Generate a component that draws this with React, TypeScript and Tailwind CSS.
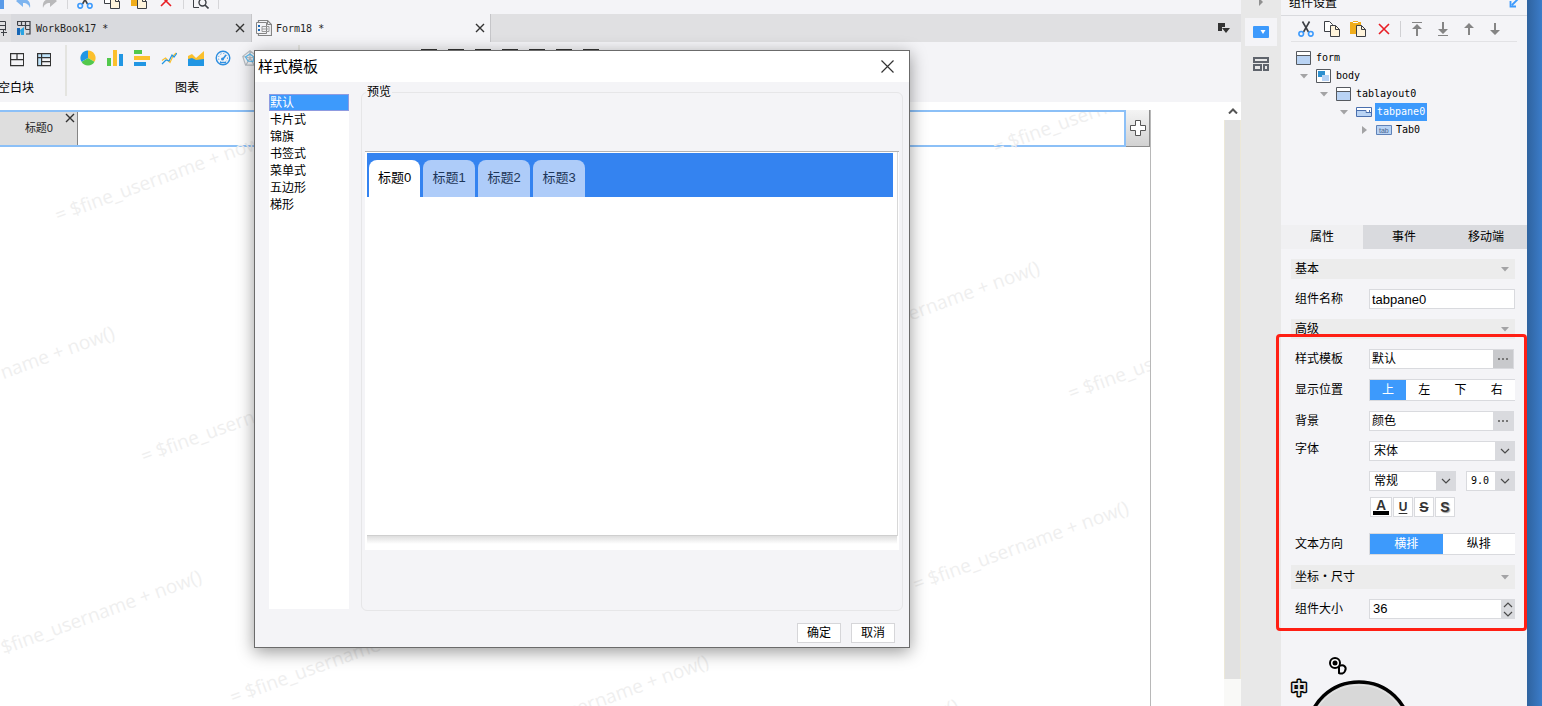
import type { ReactNode } from 'react';

const templates = ['默认', '卡片式', '锦旗', '书签式', '菜单式', '五边形', '梯形'];
const previewTabs = ['标题0', '标题1', '标题2', '标题3'];

const watermarks = [
  [58, 222], [144, 463], [233, 704], [-98, 416], [-11, 660],
  [996, 154], [1071, 400], [827, 351], [916, 591], [496, 745], [746, 789],
];

function Svg({ w = 16, h = 16, children }: { w?: number; h?: number; children: ReactNode }) {
  return (
    <svg width={w} height={h} viewBox={`0 0 ${w} ${h}`} fill="none" className="shrink-0" aria-hidden="true">
      {children}
    </svg>
  );
}

function CutIcon() {
  return (
    <Svg>
      <path d="M4.5 0.5 10.5 11M11.5 0.5 5.5 11" stroke="#3c3f45" strokeWidth="1.6" />
      <circle cx="3.2" cy="12.8" r="2.3" stroke="#3d9afc" strokeWidth="1.6" />
      <circle cx="12.8" cy="12.8" r="2.3" stroke="#3d9afc" strokeWidth="1.6" />
    </Svg>
  );
}

function CopyIcon() {
  return (
    <Svg>
      <path d="M0.5 0.5h5l3 3v7h-8z" fill="#fff" stroke="#3c3f45" />
      <path d="M6.5 4.5h5l4 4v7h-9z" fill="#fff4dc" stroke="#3c3f45" />
      <path d="M11.5 4.5v4h4" stroke="#3c3f45" />
    </Svg>
  );
}

function PasteIcon() {
  return (
    <Svg>
      <path d="M0 1h3V0h5v1h3v4H6v8H0z" fill="#f0ad1b" />
      <path d="M3 1.5h5" stroke="#fff" />
      <path d="M6.5 4.5h5l4 4v7h-9z" fill="#fff4dc" stroke="#3c3f45" />
      <path d="M11.5 4.5v4h4" stroke="#3c3f45" />
    </Svg>
  );
}

function DeleteIcon() {
  return (
    <Svg>
      <path d="M3 3l10 10M13 3L3 13" stroke="#e81e25" strokeWidth="1.6" />
    </Svg>
  );
}

function CloseIcon({ size = 10, width = 1.4 }: { size?: number; width?: number }) {
  return (
    <svg width={size} height={size} viewBox="0 0 10 10" aria-hidden="true">
      <path d="M1 1l8 8M9 1l-8 8" stroke="#333" strokeWidth={width} />
    </svg>
  );
}

function ArrowIcon({ up = false, bar = false }: { up?: boolean; bar?: boolean }) {
  return (
    <Svg>
      <g transform={up ? undefined : 'rotate(180 8 8)'} fill="#858585">
        {bar && <path d="M3 1h10v1H3z" />}
        {bar ? <path d="M7 6h2v9H7zM3 8l5-5 5 5z" /> : <path d="M7 5h2v9H7zM3 7l5-5 5 5z" />}
      </g>
    </Svg>
  );
}

function Caret({ right = false }: { right?: boolean }) {
  return (
    <Svg w={8} h={8}>
      <path d={right ? 'M2 0l5 4-5 4z' : 'M0 2h8l-4 4.5z'} fill="#a3a3a5" />
    </Svg>
  );
}

function Chevron({ up = false }: { up?: boolean }) {
  return (
    <Svg w={10} h={6}>
      <path d={up ? 'M1 5l4-4 4 4' : 'M1 1l4 4 4-4'} stroke="#4a4a4a" strokeWidth="1.2" />
    </Svg>
  );
}

function IconButton({ label, children }: { label: string; children: ReactNode }) {
  return (
    <button type="button" aria-label={label} className="flex shrink-0 items-center justify-center">
      {children}
    </button>
  );
}

function TopToolbar() {
  return (
    <div className="flex h-[14px] items-end gap-[9px] overflow-hidden bg-[#f4f4f7] pb-[5px]">
      <div className="-ml-3 flex gap-[11px]">
        <IconButton label="保存">
          <Svg><path d="M0 0h16v16H0z" fill="#5a9be8" /></Svg>
        </IconButton>
        <IconButton label="撤销">
          <Svg><path d="M1 8l7-6v4c5 0 8 3 7 9-1-3-3-5-7-5v4z" fill="#7db4ef" /></Svg>
        </IconButton>
        <IconButton label="重做">
          <Svg><path d="M15 8 8 2v4c-5 0-8 3-7 9 1-3 3-5 7-5v4z" fill="#b9b9bb" /></Svg>
        </IconButton>
      </div>
      <span className="h-4 w-px bg-[#d6d6d9]" />
      <div className="flex gap-[11px]">
        <IconButton label="剪切"><CutIcon /></IconButton>
        <IconButton label="复制"><CopyIcon /></IconButton>
        <IconButton label="粘贴"><PasteIcon /></IconButton>
        <IconButton label="删除"><DeleteIcon /></IconButton>
      </div>
      <span className="h-4 w-px bg-[#d6d6d9]" />
      <IconButton label="预览">
        <Svg>
          <path d="M6 14.5H.5V.5h12v5" stroke="#3c3f45" />
          <circle cx="9.5" cy="9.5" r="3.5" stroke="#3c3f45" strokeWidth="1.4" />
          <path d="M12 12l3.5 3.5" stroke="#3c3f45" strokeWidth="1.6" />
        </Svg>
      </IconButton>
      <span className="h-4 w-px bg-[#d6d6d9]" />
    </div>
  );
}

function FileTabs() {
  return (
    <div className="flex h-7 items-stretch bg-[#e0e0e2] font-['DejaVu_Sans_Mono',monospace] text-[10px] text-[#222]">
      <div className="flex w-[11px] items-center justify-end overflow-hidden pr-1">
        <Svg>
          <path d="M2.5 1.5h12v9M2.5 5.5h12M8.5 1.5v12M8.5 9.5h6M12.5 10v6M10 12.5h6" stroke="#3c3f45" />
        </Svg>
      </div>
      <div className="flex w-60 items-center gap-[5px] bg-[#d9dade] pr-1.5 pl-1.5">
        <Svg w={14} h={14}>
          <path d="M.5 4V.5h12.5v12.5H9M.5 4.5h12.5M4.5.5v4M8.5.5v8M9 8.5h4" stroke="#3c3f45" strokeWidth="1.2" />
          <path d="M0 7h3v7H0z" fill="#1766b5" />
          <path d="M3 9l4-3v8H4z" fill="#29a3e2" />
        </Svg>
        <span className="flex-1">WorkBook17 *</span>
        <IconButton label="关闭 WorkBook17"><CloseIcon /></IconButton>
      </div>
      <div className="flex w-60 items-center gap-1 border-x border-[#c6c6c9] bg-[#f4f4f7] pr-[5px] pl-1">
        <Svg>
          <path d="M2.5 3V.5h9l4 4v11h-13V13" stroke="#858585" strokeWidth="1.2" />
          <path d="M.5 2.5h10v11H.5z" fill="#f4f4f7" stroke="#858585" />
          <path d="M11.5.5v4h4" stroke="#858585" />
          <path d="M2 5h2v2H2zM2 9h2v2H2z" fill="#1766b5" />
          <path d="M6 6.5h7v5H6zM6 9h6" stroke="#9a9a9a" />
        </Svg>
        <span className="flex-1">Form18 *</span>
        <IconButton label="关闭 Form18"><CloseIcon /></IconButton>
      </div>
      <div className="flex flex-1 items-center justify-end pr-[11px]">
        <IconButton label="窗口列表">
          <Svg w={12} h={10}><path d="M0 0h7v4H4v4H0zM4 5h8L8 10z" fill="#333" /></Svg>
        </IconButton>
      </div>
    </div>
  );
}

function Ribbon() {
  return (
    <div className="flex h-[60px] items-start bg-[#f4f4f7] pt-[3px] text-xs text-black">
      <div className="flex h-[51px] w-[67px] flex-col justify-between border-r-2 border-[#e4e4e0] pt-1.5">
        <div className="flex gap-[13px] pl-2.5">
          <IconButton label="空白块">
            <Svg w={14} h={16}><path d="M.6 2.6h13v12H.6zM.6 8.6h13M7 2.6v6" stroke="#333" strokeWidth="1.2" /></Svg>
          </IconButton>
          <IconButton label="布局块">
            <Svg w={14} h={16}>
              <path d="M1 3h12v3H1zM1 6h3v8H1z" fill="#bfe3fa" />
              <path d="M.6 2.6h13v12H.6zM.6 6.6h13M4.6 2.6v12M4.6 10.6h9" stroke="#333" strokeWidth="1.2" />
            </Svg>
          </IconButton>
        </div>
        <span className="-ml-0.5">空白块</span>
      </div>
      <div className="flex h-[51px] w-[233px] flex-col justify-between border-r-2 border-[#e4e4e0] pt-[5px] pl-[13px]">
        <div className="flex gap-[11px]">
          <IconButton label="饼图">
            <Svg>
              <path d="M8 8V.5A7.5 7.5 0 0 1 14.5 11.8z" fill="#fbc02d" />
              <path d="M8 8l6.5 3.8A7.5 7.5 0 0 1 1.5 11.8z" fill="#52c84c" />
              <path d="M8 8 1.5 11.8A7.5 7.5 0 0 1 8 .5z" fill="#2196e3" />
            </Svg>
          </IconButton>
          <IconButton label="柱形图">
            <Svg>
              <path d="M0 8h4v8H0z" fill="#52c84c" />
              <path d="M6 0h4v16H6z" fill="#fbc02d" />
              <path d="M12 4h4v12h-4z" fill="#2196e3" />
            </Svg>
          </IconButton>
          <IconButton label="条形图">
            <Svg>
              <path d="M0 0h8v4H0z" fill="#52c84c" />
              <path d="M0 6h16v4H0z" fill="#fbc02d" />
              <path d="M0 12h12v4H0z" fill="#2196e3" />
            </Svg>
          </IconButton>
          <IconButton label="折线图">
            <Svg>
              <path d="M1 10.5 4.5 8 9 12.5 12 6l3-3" stroke="#fbc02d" strokeWidth="1.2" />
              <path d="M1 14l4-4 3 1 3-6 2 2 3-4" stroke="#2196e3" strokeWidth="1.2" />
            </Svg>
          </IconButton>
          <IconButton label="面积图">
            <Svg>
              <path d="M0 6l4-2 4 4 8-7v14H0z" fill="#fbc02d" />
              <path d="M0 9l4-1 4 2 8-1v7H0z" fill="#2196e3" />
            </Svg>
          </IconButton>
          <IconButton label="仪表盘">
            <Svg>
              <circle cx="8" cy="8" r="6.8" stroke="#2f8fe0" strokeWidth="1.4" />
              <circle cx="8" cy="8" r="4.5" stroke="#2f8fe0" strokeDasharray="1 2" />
              <path d="M8 9l3-4" stroke="#2f8fe0" strokeWidth="1.6" />
              <circle cx="7.5" cy="9" r="1.5" fill="#2f8fe0" />
              <path d="M5 12.5h6" stroke="#2f8fe0" strokeWidth="1.4" />
            </Svg>
          </IconButton>
          <IconButton label="雷达图">
            <Svg>
              <path d="M8 .8l7.2 5.6-2.8 8.8H3.6L.8 6.4zM8 1v7M1 6.5l7 1.5 7-1.5M4 15l4-7 4 7" stroke="#b5bcc2" strokeWidth="1.2" />
              <path d="M8 4l4 3-1 4.5-5-.5-2.5-4z" stroke="#5ab8ec" strokeWidth="1.2" />
            </Svg>
          </IconButton>
        </div>
        <span className="pr-1 text-center">图表</span>
      </div>
      <div className="flex gap-[11px] pt-1 pl-[121px]">
        {['文本框', '下拉框', '复选框', '按钮', '日期', '树', '表格'].map((name) => (
          <IconButton key={name} label={name}>
            <Svg><path d="M0 1h16v14H0z" stroke="#333" strokeWidth="2" /></Svg>
          </IconButton>
        ))}
      </div>
    </div>
  );
}

function Canvas() {
  return (
    <div className="flex min-h-0 flex-1 bg-white">
      <div className="flex min-w-0 flex-1 flex-col pt-2">
        <div className="mr-[73px] flex min-h-0 flex-1 flex-col border-r border-[#b8b8b8]">
          <div className="flex h-[37px]">
            <div className="flex flex-1 border-y-2 border-r-2 border-[#8cc0f7]">
              <div className="flex w-[78px] items-start justify-end border-r border-[#858585] bg-[#dedede] pt-px pr-0.5">
                <span className="pt-[7px] pr-3 text-[11px] leading-4 text-[#222]">标题0</span>
                <IconButton label="关闭标题0"><CloseIcon /></IconButton>
              </div>
            </div>
            <button
              type="button"
              aria-label="添加标签"
              className="flex w-6 items-center justify-center border-r border-b border-[#8c8c8c] bg-linear-to-b from-[#f4f4f4] to-[#d2d2d2]"
            >
              <Svg>
                <path d="M5.5.5h5v5h5v5h-5v5h-5v-5h-5v-5h5z" fill="#fff" stroke="#555" strokeLinejoin="round" />
              </Svg>
            </button>
          </div>
        </div>
      </div>
      <div className="flex w-[17px] flex-col bg-[#f9f9f7]">
        <button type="button" aria-label="向上滚动" className="flex h-[18px] items-center justify-center bg-white">
          <Svg w={10} h={6}><path d="M1 5.5l4-4 4 4" stroke="#555" strokeWidth="2" /></Svg>
        </button>
        <div className="mb-[27px] flex-1 border-x border-[#ece8d8] bg-[#e1e1e1]" />
      </div>
    </div>
  );
}

function Watermarks() {
  return (
    <svg className="pointer-events-none absolute top-28 bottom-0 left-0 w-[1150px]" height="100%" aria-hidden="true">
      <g transform="translate(0 -112)">
        {watermarks.map(([x, y]) => (
          <text
            key={`${x}-${y}`}
            transform={`translate(${x} ${y}) rotate(-20)`}
            fontSize="19"
            fill="#efefef"
            fontFamily="'Open Sans', 'Noto Sans', sans-serif"
          >
            = $fine_username + now()
          </text>
        ))}
      </g>
    </svg>
  );
}

function TemplateDialog() {
  return (
    <div
      role="dialog"
      aria-label="样式模板"
      className="absolute top-[50px] left-[254px] w-[656px] border border-[#6b6b6b] bg-[#f4f4f7] text-xs text-black shadow-[0_4px_16px_rgba(0,0,0,0.4)]"
    >
      <div className="flex h-[31px] items-center justify-between bg-white pr-3.5 pl-[3px]">
        <h2 className="text-[15px]">样式模板</h2>
        <IconButton label="关闭"><CloseIcon size={15} width={0.8} /></IconButton>
      </div>
      <div className="flex gap-3 px-1.5 pt-3 pl-3.5">
        <ul className="mb-0.5 w-20 bg-white">
          {templates.map((name, i) => (
            <li key={name}>
              <button
                type="button"
                className={
                  i === 0
                    ? 'block h-[17px] w-full border border-[#8f9be0] bg-[#3d9afc] text-left leading-4 text-white'
                    : 'block h-[17px] w-full pl-px text-left leading-[18px]'
                }
              >
                {name}
              </button>
            </li>
          ))}
        </ul>
        <fieldset className="-mt-[11px] min-w-0 flex-1 rounded-md border border-[#e6e6e8] px-[3px] pb-[60px]">
          <legend className="ml-px px-px leading-[18px]">预览</legend>
          <div className="mt-[50px] border-t border-[#b4b4b4] bg-white pb-1.5">
            <div className="ml-0.5 mr-px border-r border-[#d8d8d8] pt-px">
              <div className="mr-1 flex h-11 items-end gap-[3px] bg-[#3483f0] pl-0.5">
                {previewTabs.map((name, i) => (
                  <button
                    type="button"
                    key={name}
                    className={
                      i === 0
                        ? 'h-[37px] w-[51px] rounded-t-lg bg-white pb-0.5 text-[13px] text-black'
                        : 'h-[37px] w-[52px] rounded-t-lg bg-[#aeccf9] pb-0.5 text-[13px] text-[#1d3658]'
                    }
                  >
                    {name}
                  </button>
                ))}
              </div>
              <div className="h-[339px] border-b border-[#cfcfcf]" />
            </div>
            <div className="mx-0.5 h-2 bg-linear-to-b from-[#dedede] to-white" />
          </div>
        </fieldset>
      </div>
      <div className="flex justify-end gap-2.5 px-3.5 pt-3 pb-1">
        <button type="button" className="h-5 w-11 border border-[#d6d6d9] bg-white leading-[18px]">确定</button>
        <button type="button" className="h-5 w-11 border border-[#d6d6d9] bg-white leading-[18px]">取消</button>
      </div>
    </div>
  );
}

function Rail() {
  return (
    <nav className="flex w-10 flex-col items-center bg-[#e8e8e8]">
      <div className="flex h-[18px] items-start"><Svg w={8} h={8}><path d="M2-2l4 4-4 4z" fill="#909090" /></Svg></div>
      <button type="button" aria-label="组件设置" className="flex h-7 w-8 items-center justify-center bg-[#f4f4f7]">
        <Svg w={16} h={12}>
          <rect width="16" height="12" rx="1" fill="#3d9afc" />
          <path d="M7.500 4h5L10 8z" fill="#fff" />
        </Svg>
      </button>
      <button type="button" aria-label="组件库" className="mt-[11px]">
        <Svg w={16} h={14}>
          <path d="M1 1h14v4H1zM1 8h7v5H1zM11 8h4v5h-4z" stroke="#5f646c" strokeWidth="2" />
        </Svg>
      </button>
    </nav>
  );
}

function WindowIcon() {
  return (
    <Svg w={15} h={14}>
      <path d="M.5.5h14v13H.5z" fill="#b9d3f4" stroke="#55595f" />
      <path d="M1 1h13v3H1z" fill="#fff" />
      <path d="M1 4.5h13" stroke="#55595f" />
    </Svg>
  );
}

function ComponentTree() {
  const row = 'flex h-[18px] items-center';
  return (
    <ul className="h-[183px] pt-[7px] pl-[3px] font-['DejaVu_Sans_Mono',monospace] text-[10px] text-black">
      <li className={`${row} pl-3`}>
        <WindowIcon /><span className="ml-[5px]">form</span>
      </li>
      <li className={`${row} pl-4`}>
        <Caret />
        <span className="ml-2"><Svg w={15} h={14}>
          <path d="M.5.5h14v13H.5z" fill="#fff" stroke="#55595f" />
          <path d="M2 2h7v6H2z" fill="#2e90cf" />
          <path d="M6 6h7v6H6z" fill="#b9d3f4" />
        </Svg></span>
        <span className="ml-[5px]">body</span>
      </li>
      <li className={`${row} pl-9`}>
        <Caret /><span className="ml-2"><WindowIcon /></span><span className="ml-[5px]">tablayout0</span>
      </li>
      <li className={`${row} pl-14`}>
        <Caret />
        <span className="ml-2"><Svg w={16} h={10}>
          <path d="M.5.5h15v9H.5z" fill="#fff" stroke="#4a6fae" />
          <path d="M1 4h8v1h6v4H1z" fill="#b9d3f4" />
          <path d="M1 3.5h9v2h5M13.5 3v3" stroke="#4a6fae" />
        </Svg></span>
        <span className="ml-[3px] bg-[#3d9afc] px-0.5 leading-[18px] text-white">tabpane0</span>
      </li>
      <li className={`${row} pl-[76px]`}>
        <Caret right />
        <span className="ml-2"><Svg w={16} h={10}>
          <path d="M.5.5h15v9H.5z" fill="#b9d3f4" stroke="#5f82b8" />
          <text x="3" y="8" fontSize="7" fill="#46638f" fontFamily="'Liberation Sans', sans-serif">tab</text>
        </Svg></span>
        <span className="ml-1">Tab0</span>
      </li>
    </ul>
  );
}

function Section({ title, tall = false }: { title: string; tall?: boolean }) {
  return (
    <button
      type="button"
      className={`flex w-full items-center justify-between bg-[#ececec] pr-1.5 pl-1 text-left ${tall ? 'h-6' : 'h-5'}`}
    >
      <span>{title}</span>
      <Caret />
    </button>
  );
}

function Field({ label, id, children }: { label: string; id?: string; children: ReactNode }) {
  return (
    <div className="flex items-center">
      {id ? (
        <label htmlFor={id} className="w-[78px] shrink-0 pl-1">{label}</label>
      ) : (
        <span className="w-[78px] shrink-0 pl-1">{label}</span>
      )}
      {children}
    </div>
  );
}

function PickerField({ label, id, value, active = false }: { label: string; id: string; value: string; active?: boolean }) {
  return (
    <Field label={label} id={id}>
      <div className="mr-px flex h-5 min-w-0 flex-1 border border-[#d9dade]">
        <input id={id} defaultValue={value} className="min-w-0 flex-1 bg-white px-0.5 outline-none" />
        <button
          type="button"
          aria-label={`选择${label}`}
          className={`flex w-5 items-center justify-center ${active ? 'bg-[#c8c9cc]' : 'bg-[#d9dade]'}`}
        >
          <Svg w={12} h={2}><path d="M1 0h2v2H1zM5 0h2v2H5zM9 0h2v2H9z" fill="#777" /></Svg>
        </button>
      </div>
    </Field>
  );
}

function Dropdown({ id, label, value, className }: { id: string; label: string; value: string; className: string }) {
  return (
    <div className={`relative h-5 ${className}`}>
      <select
        id={id}
        aria-label={label}
        defaultValue={value}
        className="h-full w-full appearance-none border border-[#d9dade] bg-white pr-5 pl-1 outline-none"
      >
        <option>{value}</option>
      </select>
      <span className="pointer-events-none absolute inset-y-0 right-0 flex w-5 items-center justify-center bg-[#d9dade]">
        <Chevron />
      </span>
    </div>
  );
}

function Segments({ options }: { options: string[] }) {
  return (
    <div className="flex h-[22px] min-w-0 flex-1 border-y border-l border-[#d9dade] bg-white">
      {options.map((option, i) => (
        <button
          type="button"
          key={option}
          aria-pressed={i === 0}
          className={i === 0 ? 'flex-1 bg-[#3d9afc] text-white' : 'flex-1'}
        >
          {option}
        </button>
      ))}
    </div>
  );
}

function PropertyPanel() {
  const styleButton = 'flex h-5 w-5 items-center justify-center border border-[#d9dade] bg-white';
  return (
    <aside className="relative flex w-[246px] flex-col bg-[#f4f4f7] text-xs text-black">
      <div className="flex h-4 items-end justify-between border-b border-[#d9dade] pr-2 pb-1 pl-2">
        <span className="leading-4">组件设置</span>
        <IconButton label="弹出">
          <Svg w={10} h={12}><path d="M9 0 3 6M1.500 2v5.500H7" stroke="#3d9afc" strokeWidth="1.8" /></Svg>
        </IconButton>
      </div>
      <div className="mr-2.5 ml-2.5 flex h-[26px] items-center gap-2.5 border-b border-[#e2e2e5] pl-[7px]">
        <IconButton label="剪切"><CutIcon /></IconButton>
        <IconButton label="复制"><CopyIcon /></IconButton>
        <IconButton label="粘贴"><PasteIcon /></IconButton>
        <IconButton label="删除"><DeleteIcon /></IconButton>
        <span className="-mx-0.5 h-4 w-px bg-[#d0d0d3]" />
        <IconButton label="置顶"><ArrowIcon up bar /></IconButton>
        <IconButton label="置底"><ArrowIcon bar /></IconButton>
        <IconButton label="上移"><ArrowIcon up /></IconButton>
        <IconButton label="下移"><ArrowIcon /></IconButton>
      </div>
      <ComponentTree />
      <div className="flex h-6 bg-[#d9dade]">
        <button type="button" className="flex-1 bg-[#f0f0f2]">属性</button>
        <button type="button" className="flex-1">事件</button>
        <button type="button" className="flex-1">移动端</button>
      </div>
      <div className="flex flex-col gap-2.5 pt-2.5 pr-3 pl-2.5">
        <Section title="基本" />
        <Field label="组件名称" id="name">
          <input
            id="name"
            defaultValue="tabpane0"
            className="h-5 min-w-0 flex-1 border border-[#d9dade] bg-white px-0.5 font-['Liberation_Sans',sans-serif] text-[13px] outline-none"
          />
        </Field>
        <Section title="高级" />
        <PickerField label="样式模板" id="template" value="默认" active />
        <Field label="显示位置"><Segments options={['上', '左', '下', '右']} /></Field>
        <PickerField label="背景" id="background" value="颜色" />
        <div className="flex items-start">
          <label htmlFor="font" className="w-[78px] shrink-0 pl-1 leading-4">字体</label>
          <div className="min-w-0 flex-1">
            <Dropdown id="font" label="字体" value="宋体" className="w-full" />
            <div className="mt-2.5 flex justify-between">
              <Dropdown id="weight" label="字形" value="常规" className="w-[87px]" />
              <Dropdown id="size" label="字号" value="9.0" className="w-[49px] font-['DejaVu_Sans_Mono',monospace] text-[10px]" />
            </div>
            <div className="mt-1.5 flex gap-px pl-px font-['Liberation_Sans',sans-serif] text-sm font-bold text-[#333]">
              <button type="button" aria-label="字体颜色" className="flex h-5 w-[22px] items-center justify-center border border-[#d9dade] bg-white">
                <span className="w-4 border-b-4 border-black leading-3">A</span>
              </button>
              <button type="button" aria-label="下划线" className={`${styleButton} text-xs underline underline-offset-2`}>U</button>
              <button type="button" aria-label="删除线" className={`${styleButton} line-through`}>S</button>
              <button type="button" aria-label="阴影" className={`${styleButton} text-shadow-[1px_1px_1px_#999]`}>S</button>
            </div>
          </div>
        </div>
        <div className="mt-1.5">
          <Field label="文本方向"><Segments options={['横排', '纵排']} /></Field>
        </div>
        <Section title="坐标・尺寸" tall />
        <Field label="组件大小" id="component-size">
          <div className="flex h-5 min-w-0 flex-1 border border-[#d9dade]">
            <input
              id="component-size"
              defaultValue="36"
              className="min-w-0 flex-1 bg-white px-[3px] font-['Liberation_Sans',sans-serif] text-[13px] outline-none"
            />
            <div className="flex w-[13px] flex-col items-center justify-around bg-[#d9dade]">
              <IconButton label="增大"><Chevron up /></IconButton>
              <IconButton label="减小"><Chevron /></IconButton>
            </div>
          </div>
        </Field>
      </div>
      <div className="pointer-events-none absolute top-[334px] -left-[5px] h-[297px] w-[251px] rounded-sm border-3 border-[#ff1f14]" />
      <svg className="mt-8 min-h-0 w-full flex-1" viewBox="0 0 246 55" preserveAspectRatio="xMinYMin slice" aria-hidden="true">
        <ellipse cx="78" cy="78" rx="50" ry="47" fill="#d8d8d8" stroke="#000" strokeWidth="3.500" />
        <ellipse cx="78" cy="78" rx="47" ry="44" stroke="#e8e8e8" fill="none" />
        <path d="M58 15c5-2 8 1 6 5-1 3-4 3-6 2z" fill="#f4f4f7" stroke="#000" strokeWidth="2" />
        <circle cx="54" cy="12" r="5" fill="#fff" stroke="#000" strokeWidth="2" />
        <circle cx="54" cy="12" r="2.500" fill="#000" />
        <text
          x="10"
          y="43"
          fontSize="16"
          fontWeight="700"
          fill="#e4e4e4"
          stroke="#000"
          strokeWidth="3"
          strokeLinejoin="round"
          paintOrder="stroke"
          fontFamily="'Noto Sans CJK SC', sans-serif"
        >
          中
        </text>
      </svg>
    </aside>
  );
}

export default function App() {
  return (
    <div className="flex h-screen overflow-hidden bg-white font-['Liberation_Sans','Noto_Sans_CJK_SC',sans-serif]">
      <main className="relative flex min-w-0 flex-1 flex-col">
        <TopToolbar />
        <FileTabs />
        <Ribbon />
        <Canvas />
        <Watermarks />
        <TemplateDialog />
      </main>
      <Rail />
      <PropertyPanel />
      <div className="w-[15px] bg-linear-to-r from-[#2f639f] to-[#3b7cc9]" />
    </div>
  );
}
